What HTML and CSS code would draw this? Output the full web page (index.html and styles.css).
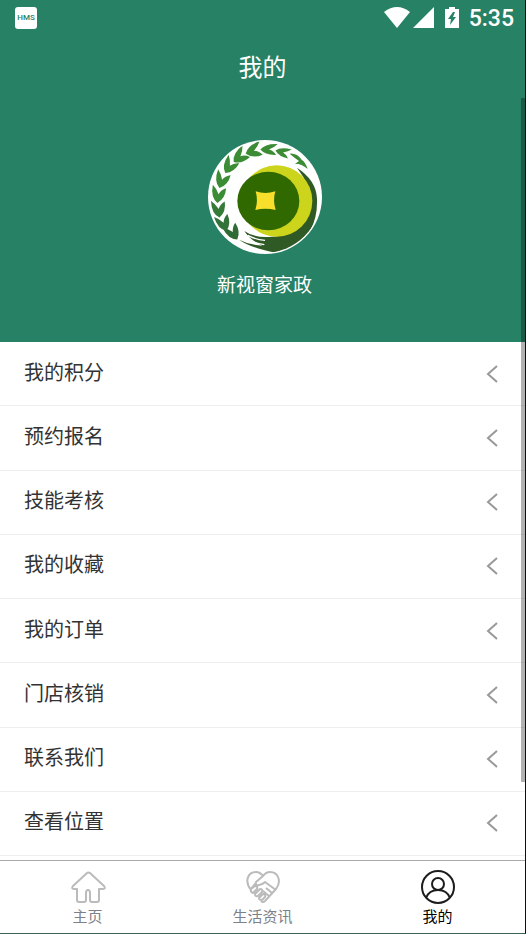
FILE: index.html
```
<!DOCTYPE html>
<html lang="zh-CN">
<head>
  <meta charset="UTF-8">
  <meta name="viewport" content="width=device-width, initial-scale=1.0">
  <title>我的</title>
  <link rel="stylesheet" href="styles.css">
</head>
<body>
  <div class="app">
    <header class="header">
      <div class="status-bar">
        <span class="hms">HMS</span>
        <div class="status-icons">
          <svg width="26" height="21" viewBox="0 0 26 21"><path fill="#fff" d="M0 5Q13-5 26 5L13 21Z"/></svg>
          <svg width="21" height="21" viewBox="0 0 21 21"><path fill="#fff" d="M21 0V21H0Z"/></svg>
          <svg class="battery" width="14" height="21" viewBox="0 0 14 21"><path fill="#fff" d="M4 0h6v2h4v19H0V2h4Z"/><path fill="#278165" d="M8 5L3 12h3l-1 6 6-8H8l2-5Z"/></svg>
          <time class="clock">5:35</time>
        </div>
      </div>
      <h1 class="title">我的</h1>
      <div class="profile">
        <svg class="avatar" viewBox="23 29 342 342" role="img" aria-label="新视窗家政">
          <defs>
            <clipPath id="round"><circle cx="194" cy="200" r="167"/></clipPath>
            <path id="leaf" d="M1 28Q-22 14-20-24Q-7-14 1 2Q6-12 21-19Q23 12 1 28Z"/>
          </defs>
          <circle cx="194" cy="200" r="171" fill="#fff"/>
          <g clip-path="url(#round)">
            <path fill="#305a25" d="M290 112Q348 150 350 205Q352 260 330 300L340 340L280 375Q165 362 116 328Q150 345 186 346Q150 330 132 302Q160 322 205 320Q285 318 322 260Q350 190 290 112Z"/>
            <path fill="none" stroke="#fff" stroke-width="4" d="M122 318Q150 336 192 343M142 315Q166 328 194 330"/>
            <circle cx="229" cy="212" r="107" fill="#cdd41c"/>
            <path fill="#fff" d="M118 150Q104 212 128 256Q142 288 172 307Q110 296 100 220Q100 170 118 150Z"/>
            <ellipse cx="204" cy="212" rx="93" ry="88" fill="#2f6900"/>
            <path fill="#f8df2c" d="M166 183Q195 193 225 183Q217 211 226 239Q195 232 165 239Q174 211 166 183Z"/>
            <g fill="#3b8c35">
              <use href="#leaf" fill="#2f6b35" transform="translate(96 304) rotate(-30)"/>
              <use href="#leaf" fill="#33733a" transform="translate(68 276) rotate(-20)"/>
              <use href="#leaf" fill="#357b38" transform="translate(54 234) rotate(-5)"/>
              <use href="#leaf" transform="translate(54 190) rotate(8)"/>
              <use href="#leaf" transform="translate(65 146) rotate(18)"/>
              <use href="#leaf" transform="translate(89 104) rotate(32)"/>
              <use href="#leaf" transform="translate(121 76) rotate(50)"/>
              <use href="#leaf" transform="translate(162 60) rotate(70)"/>
              <use href="#leaf" transform="translate(208 57) rotate(90) scale(.8 1)"/>
              <use href="#leaf" transform="translate(250 66) rotate(104) scale(.7 .9)"/>
              <path d="M268 70Q290 68 304 88Q316 96 322 116Q304 100 284 100Q292 96 296 92Q282 82 268 70Z"/>
            </g>
          </g>
        </svg>
        <p class="name">新视窗家政</p>
      </div>
    </header>

    <main class="menu">
      <a class="row" href="#"><span>我的积分</span><svg class="arrow" viewBox="0 0 12 20"><path d="M11 2L2 10l9 8"/></svg></a>
      <a class="row" href="#"><span>预约报名</span><svg class="arrow" viewBox="0 0 12 20"><path d="M11 2L2 10l9 8"/></svg></a>
      <a class="row" href="#"><span>技能考核</span><svg class="arrow" viewBox="0 0 12 20"><path d="M11 2L2 10l9 8"/></svg></a>
      <a class="row" href="#"><span>我的收藏</span><svg class="arrow" viewBox="0 0 12 20"><path d="M11 2L2 10l9 8"/></svg></a>
      <a class="row" href="#"><span>我的订单</span><svg class="arrow" viewBox="0 0 12 20"><path d="M11 2L2 10l9 8"/></svg></a>
      <a class="row" href="#"><span>门店核销</span><svg class="arrow" viewBox="0 0 12 20"><path d="M11 2L2 10l9 8"/></svg></a>
      <a class="row" href="#"><span>联系我们</span><svg class="arrow" viewBox="0 0 12 20"><path d="M11 2L2 10l9 8"/></svg></a>
      <a class="row" href="#"><span>查看位置</span><svg class="arrow" viewBox="0 0 12 20"><path d="M11 2L2 10l9 8"/></svg></a>
    </main>

    <nav class="tabs">
      <a class="tab" href="#">
        <svg class="tab-icon" viewBox="0 0 36 36"><path d="M17 4L3 17q-2 3 1 3h3v11q0 2 2 2h5q2 0 2-2v-7q0-3 2-3t2 3v7q0 2 2 2h5q2 0 2-2V20h4q3 0 1-3L20 4q-2-1-3 0Z"/></svg>
        <span>主页</span>
      </a>
      <a class="tab" href="#">
        <svg class="tab-icon" viewBox="0 0 36 36"><path d="M6 21C-1 12 3 3 11 3q4 0 7 4 3-4 7-4c8 0 12 9 6 17L20 32q-2 2-4 0M18 7l-7 6q-1 4 3 3 3 0 6-3l11 8M6 20l5-6M6 20q-1 3 2 4l4-4q1-3-2-3ZM10 25l5-5q3 0 2 3l-4 4q-3 1-3-2ZM14 29l4-4q3 0 2 3l-3 3q-3 0-3-2ZM21 19l6 5M18 22l6 5"/></svg>
        <span>生活资讯</span>
      </a>
      <a class="tab active" href="#">
        <svg class="tab-icon" viewBox="0 0 36 36"><circle cx="18" cy="18" r="16"/><circle cx="18" cy="15" r="6"/><path d="M6 29Q9 21 18 21t12 8"/></svg>
        <span>我的</span>
      </a>
    </nav>
    <div class="scrollbar"></div>
  </div>
</body>
</html>
```

FILE: styles.css
```
* {
  box-sizing: border-box;
}
body {
  margin: 0;
  font-family: "Noto Sans CJK SC", sans-serif;
  background: #fff;
}
a {
  color: inherit;
  text-decoration: none;
}
.app {
  position: relative;
  display: flex;
  flex-direction: column;
  min-height: 100vh;
  border-right: 1px solid #0b0f18;
  border-bottom: 1px solid #3c6357;
}

/* green top area */
.header {
  padding-bottom: 44px;
  background: #278165;
  color: #fff;
  text-align: center;
}
.status-bar {
  display: flex;
  justify-content: space-between;
  align-items: center;
  height: 35px;
  padding: 0 11px 0 15px;
}
.hms {
  width: 22px;
  border-radius: 3px;
  background: #fff;
  color: #278165;
  font: 500 8px/22px Roboto, sans-serif;
}
.status-icons {
  display: flex;
  align-items: center;
  gap: 3px;
}
.battery {
  margin: 0 7px 0 8px;
}
.clock {
  font: 500 23px/35px Roboto, sans-serif;
  padding-top: 2px;
}
.title {
  margin: 0;
  font-size: 24px;
  font-weight: 400;
  line-height: 62px;
}
.profile {
  padding: 43px 0 0 4px;
}
.avatar {
  display: block;
  width: 114px;
  height: 114px;
  margin: 0 auto;
}
.name {
  margin: 16px 0 0;
  font-size: 19px;
  line-height: 28px;
}

/* menu list */
.menu {
  flex: 1;
  display: grid;
  grid-auto-rows: 1fr;
  padding-bottom: 4px;
}
.row {
  display: flex;
  justify-content: space-between;
  align-items: center;
  min-height: 56px;
  padding: 0 27px 0 24px;
  border-bottom: 1px solid #eee;
  color: #333;
  font-size: 20px;
}
.row span {
  padding-bottom: 5px;
}
.arrow {
  width: 12px;
  height: 20px;
  fill: none;
  stroke: #999;
  stroke-width: 2;
}

/* bottom tabs */
.tabs {
  display: flex;
  border-top: 1px solid #aaa;
}
.tab {
  flex: 1;
  display: flex;
  flex-direction: column;
  align-items: center;
  padding: 8px 0 6px;
  color: #7c8088;
  font-size: 15px;
  line-height: 22px;
}
.tab-icon {
  width: 36px;
  height: 36px;
  fill: none;
  stroke: #bbb;
  stroke-width: 2;
  stroke-linejoin: round;
}
.active {
  color: #000;
}
.active .tab-icon {
  stroke: #1c1c1c;
}

.scrollbar {
  position: absolute;
  top: 98px;
  right: 0;
  width: 4px;
  height: 684px;
  background: rgba(0, 0, 0, 0.3);
}
```
